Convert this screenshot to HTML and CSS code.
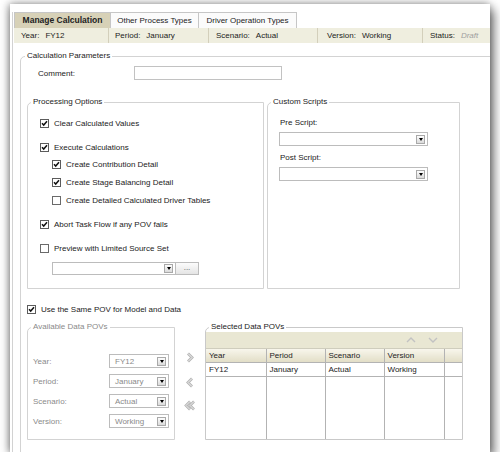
FILE: index.html
```html
<!DOCTYPE html>
<html lang="en">
<head>
    <meta charset="UTF-8">
    <title>Manage Calculation</title>
    <link rel="stylesheet" href="styles.css">
</head>
<body>
    <svg class="defs" width="0" height="0">
        <symbol id="cb-on" viewBox="0 0 9 9">
            <rect x=".5" y=".5" width="8" height="8" fill="#fff" stroke="#5c5c5c"/>
            <path d="M2 4.3 L3.7 6.1 L7 2.3" fill="none" stroke="#111" stroke-width="1.5"/>
        </symbol>
        <symbol id="cb-off" viewBox="0 0 9 9">
            <rect x=".5" y=".5" width="8" height="8" fill="#fff" stroke="#6a6a6a"/>
        </symbol>
    </svg>

    <div class="window">
        <div class="panel">
            <div class="tabs">
                <div class="tab tab-1 active">Manage Calculation</div>
                <div class="tab tab-2">Other Process Types</div>
                <div class="tab tab-3">Driver Operation Types</div>
            </div>

            <div class="infobar">
                <div class="info info-1"><span class="key">Year:</span>FY12</div>
                <div class="info info-2"><span class="key">Period:</span>January</div>
                <div class="info info-3"><span class="key">Scenario:</span>Actual</div>
                <div class="info info-4"><span class="key">Version:</span>Working</div>
                <div class="info info-5"><span class="key">Status:</span><em class="draft">Draft</em></div>
            </div>

            <div class="content">
                <fieldset class="group main">
                    <legend>Calculation Parameters</legend>

                    <div class="comment-row">
                        <label class="comment-label">Comment:</label>
                        <input class="textbox" type="text">
                    </div>

                    <div class="options-row">
                        <!-- Processing options -->
                        <fieldset class="group processing">
                            <legend>Processing Options</legend>
                            <div class="check first"><svg width="9" height="9"><use href="#cb-on"/></svg>Clear Calculated Values</div>
                            <div class="check gap-lg"><svg width="9" height="9"><use href="#cb-on"/></svg>Execute Calculations</div>
                            <div class="check sub gap-sm"><svg width="9" height="9"><use href="#cb-on"/></svg>Create Contribution Detail</div>
                            <div class="check sub gap-md"><svg width="9" height="9"><use href="#cb-on"/></svg>Create Stage Balancing Detail</div>
                            <div class="check sub gap-md"><svg width="9" height="9"><use href="#cb-off"/></svg>Create Detailed Calculated Driver Tables</div>
                            <div class="check gap-lg"><svg width="9" height="9"><use href="#cb-on"/></svg>Abort Task Flow if any POV fails</div>
                            <div class="check gap-lg"><svg width="9" height="9"><use href="#cb-off"/></svg>Preview with Limited Source Set</div>
                            <div class="source-row">
                                <div class="select source-select"><span></span><span class="dd-btn"></span></div>
                                <div class="dots-btn">...</div>
                            </div>
                        </fieldset>

                        <!-- Custom scripts -->
                        <fieldset class="group scripts">
                            <legend>Custom Scripts</legend>
                            <div class="script-label first">Pre Script:</div>
                            <div class="select script-select"><span></span><span class="dd-btn"></span></div>
                            <div class="script-label">Post Script:</div>
                            <div class="select script-select"><span></span><span class="dd-btn"></span></div>
                        </fieldset>
                    </div>

                    <div class="check same-pov"><svg width="9" height="9"><use href="#cb-on"/></svg>Use the Same POV for Model and Data</div>

                    <div class="pov-row">
                        <fieldset class="group available">
                            <legend>Available Data POVs</legend>
                            <div class="pov-field first"><span class="pov-label">Year:</span><div class="select pov-select"><span>FY12</span><span class="dd-btn"></span></div></div>
                            <div class="pov-field"><span class="pov-label">Period:</span><div class="select pov-select"><span>January</span><span class="dd-btn"></span></div></div>
                            <div class="pov-field"><span class="pov-label">Scenario:</span><div class="select pov-select"><span>Actual</span><span class="dd-btn"></span></div></div>
                            <div class="pov-field"><span class="pov-label">Version:</span><div class="select pov-select"><span>Working</span><span class="dd-btn"></span></div></div>
                        </fieldset>

                        <div class="shuttle">
                            <svg class="move move-right" width="10" height="11" viewBox="0 0 10 11">
                                <path d="M3 1.5 L7 5.5 L3 9.5" fill="none" stroke="#b4b4b4" stroke-width="2.8"/>
                                <path d="M3 1.5 L7 5.5 L3 9.5" fill="none" stroke="#f4f4f4" stroke-width="1"/>
                            </svg>
                            <svg class="move move-left" width="10" height="11" viewBox="0 0 10 11">
                                <path d="M7 1.5 L3 5.5 L7 9.5" fill="none" stroke="#b4b4b4" stroke-width="2.8"/>
                                <path d="M7 1.5 L3 5.5 L7 9.5" fill="none" stroke="#f4f4f4" stroke-width="1"/>
                            </svg>
                            <svg class="move move-all" width="12" height="11" viewBox="0 0 12 11">
                                <path d="M6 1.5 L2 5.5 L6 9.5 M10 1.5 L6 5.5 L10 9.5" fill="none" stroke="#b4b4b4" stroke-width="2.6"/>
                                <path d="M6 1.5 L2 5.5 L6 9.5 M10 1.5 L6 5.5 L10 9.5" fill="none" stroke="#f4f4f4" stroke-width="0.9"/>
                            </svg>
                        </div>

                        <fieldset class="group selected">
                            <legend>Selected Data POVs</legend>
                            <div class="toolbar">
                                <svg width="10" height="6" viewBox="0 0 10 6"><path d="M1 5 L5 1 L9 5" fill="none" stroke="#c2c2c2" stroke-width="1.4"/></svg>
                                <svg width="10" height="6" viewBox="0 0 10 6"><path d="M1 1 L5 5 L9 1" fill="none" stroke="#c2c2c2" stroke-width="1.4"/></svg>
                            </div>
                            <table class="pov-table">
                                <colgroup>
                                    <col class="c-year"><col class="c-period"><col class="c-scenario"><col class="c-version"><col>
                                </colgroup>
                                <thead>
                                    <tr><th>Year</th><th>Period</th><th>Scenario</th><th>Version</th><th></th></tr>
                                </thead>
                                <tbody>
                                    <tr><td>FY12</td><td>January</td><td>Actual</td><td>Working</td><td></td></tr>
                                    <tr class="filler"><td></td><td></td><td></td><td></td><td></td></tr>
                                </tbody>
                            </table>
                        </fieldset>
                    </div>
                </fieldset>
            </div>
        </div>
    </div>
</body>
</html>
```

FILE: styles.css
```css
body {
    margin: 0;
    background: #fff;
    font-family: "Liberation Sans", Arial, sans-serif;
    font-size: 8px;
    color: #222;
    overflow: hidden;
}
.defs {
    display: block;
    width: 0;
    height: 0;
    overflow: hidden;
}

/* window frame */
.window {
    margin: 4px 0 0 10px;
    width: 480px;
    height: 448px;
    box-sizing: border-box;
    padding: 8px 0 0 2px;
    background: #fff;
    overflow: hidden;
    box-shadow: -1px 0 8px rgba(0,0,0,0.45), 4px 6px 10px rgba(0,0,0,0.5);
}
.panel {
    height: 100%;
    border-left: 1px solid #d2d2d2;
    padding-left: 1px;
}

/* tabs */
.tabs {
    display: flex;
    height: 16px;
}
.tab {
    box-sizing: border-box;
    line-height: 15px;
    text-align: center;
    border: 1px solid #c6c6c6;
    border-bottom: 0;
    border-left: 0;
    background: #fbfbfb;
}
.tab-1 { width: 97px; border-left: 1px solid #c6c6c6; }
.tab-2 { width: 88px; }
.tab-3 { width: 98px; }
.tab.active {
    background: #d7d1b7;
    font-weight: bold;
    font-size: 8.5px;
}

/* info bar */
.infobar {
    display: flex;
    height: 15px;
    background: #efeedf;
}
.info {
    box-sizing: border-box;
    line-height: 15px;
    padding-left: 7px;
    border-right: 1px solid #d3cfbb;
    white-space: nowrap;
}
.info-1 { width: 95px; }
.info-2 { width: 100px; padding-left: 6px; }
.info-3 { width: 109px; }
.info-4 { width: 105px; padding-left: 9px; }
.info-5 { flex: 1; border-right: 0; }
.key {
    margin-right: 6px;
}
.draft {
    color: #a0a0a0;
}

/* group boxes */
.content {
    padding: 8px 0 0 6px;
}
.group {
    margin: 0;
    padding: 0;
    min-width: 0;
    box-sizing: border-box;
    border: 1px solid #d3d3d3;
    border-top-left-radius: 5px;
}
.group legend {
    padding: 0 2px;
    margin-left: 3px;
    line-height: 10px;
}
.main {
    width: 480px;
    height: 420px;
}
.main > legend {
    margin-left: 4px;
}

.comment-row {
    display: flex;
    align-items: center;
    height: 14px;
    margin: 5px 0 0 17px;
}
.comment-label {
    width: 96px;
}
.textbox {
    box-sizing: border-box;
    width: 148px;
    height: 14px;
    margin: 0;
    padding: 0;
    border: 1px solid #c2c2c2;
}

.options-row {
    display: flex;
    gap: 3px;
    margin: 17px 0 0 6px;
}
.processing {
    width: 237px;
    height: 192px;
}
.scripts {
    width: 193px;
    height: 192px;
}

/* checkboxes */
.check {
    display: flex;
    align-items: center;
    gap: 5px;
    height: 12px;
    margin-left: 12px;
    white-space: nowrap;
}
.check svg {
    flex: none;
}
.check.sub { margin-left: 24px; }
.check.first { margin-top: 10px; }
.gap-lg { margin-top: 12px; }
.gap-sm { margin-top: 5px; }
.gap-md { margin-top: 6px; }

/* dropdowns */
.select {
    box-sizing: border-box;
    display: flex;
    align-items: center;
    justify-content: space-between;
    border: 1px solid #bcbcbc;
    background: #fff;
}
.dd-btn {
    box-sizing: border-box;
    width: 9px;
    height: 9px;
    margin-right: 2px;
    border: 1px solid #a9a9a9;
    background: linear-gradient(#fdfdfd, #dadada);
    display: flex;
    align-items: center;
    justify-content: center;
}
.dd-btn::after {
    content: "";
    border-left: 2.5px solid transparent;
    border-right: 2.5px solid transparent;
    border-top: 3px solid #000;
}

.source-row {
    display: flex;
    margin: 8px 0 0 24px;
}
.source-select {
    width: 124px;
    height: 13px;
}
.dots-btn {
    box-sizing: border-box;
    width: 23px;
    height: 13px;
    border: 1px solid #bcbcbc;
    border-left: 0;
    background: linear-gradient(#fcfcfc, #e4e4e4);
    text-align: center;
    line-height: 10px;
    color: #555;
}

.script-label {
    line-height: 10px;
    margin: 7px 0 0 12px;
}
.script-label.first { margin-top: 11px; }
.script-select {
    width: 149px;
    height: 14px;
    margin: 4px 0 0 11px;
}

.same-pov {
    margin: 14px 0 0 6px;
}

/* POV area */
.pov-row {
    display: flex;
    margin: 7px 0 0 6px;
}
.available {
    width: 148px;
    height: 118px;
    color: #8a8a8a;
}
.pov-field {
    display: flex;
    align-items: center;
    height: 14px;
    margin: 6px 0 0 5px;
}
.pov-field.first { margin-top: 22px; }
.pov-label {
    width: 76px;
}
.pov-select {
    width: 60px;
    height: 14px;
    padding-left: 5px;
    color: #8a8a8a;
}

.shuttle {
    width: 30px;
    display: flex;
    flex-direction: column;
    align-items: center;
    padding-top: 30px;
}
.move-left { margin-top: 14px; }
.move-all { margin-top: 12px; }

.selected {
    width: 258px;
    height: 118px;
    border-color: #c9c9c9;
}
.toolbar {
    height: 16px;
    background: #e9e7d3;
    border-bottom: 1px solid #cfcdbd;
    display: flex;
    justify-content: flex-end;
    align-items: center;
    gap: 12px;
    padding-right: 24px;
}
.pov-table {
    width: 100%;
    height: 90px;
    border-collapse: collapse;
    border-style: hidden;
    table-layout: fixed;
}
.c-year { width: 60px; }
.c-period { width: 59px; }
.c-scenario { width: 59px; }
.c-version { width: 60px; }
.pov-table th,
.pov-table td {
    border: 1px solid #b3b3b3;
    padding: 0 0 0 3px;
    height: 13px;
    text-align: left;
    font-weight: normal;
    white-space: nowrap;
}
.pov-table th {
    background: linear-gradient(#f8f6ec, #e2dec7);
}
.pov-table .filler td {
    height: auto;
}
```
